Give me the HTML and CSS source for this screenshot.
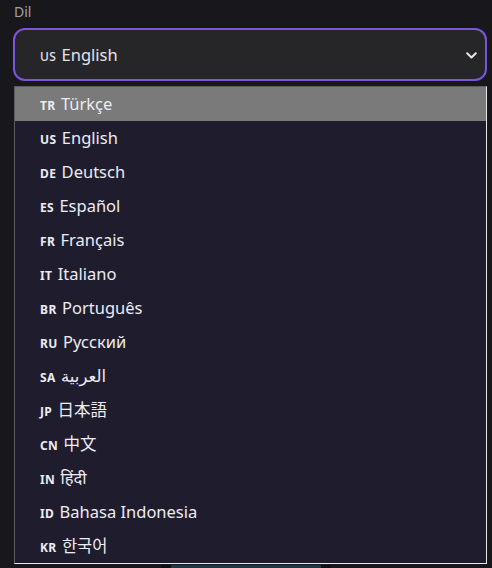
FILE: index.html
```html
<!DOCTYPE html>
<html lang="tr">
<head>
  <meta charset="UTF-8">
  <title>Ayarlar</title>
  <link rel="stylesheet" href="styles.css">
</head>
<body>
  <div class="field">
    <label class="field-label">Dil</label>
    <div class="select">
      <span class="select-value"><span class="flag">US</span> English</span>
      <svg class="chevron" width="11" height="7" viewBox="0 0 11 7">
        <path d="M1.2 1.2 L5.5 5.5 L9.8 1.2" fill="none" stroke="#e6e6ea" stroke-width="2" stroke-linecap="round" stroke-linejoin="round"/>
      </svg>
    </div>

    <ul class="options">
      <li class="option active"><span class="flag">TR</span> Türkçe</li>
      <li class="option"><span class="flag">US</span> English</li>
      <li class="option"><span class="flag">DE</span> Deutsch</li>
      <li class="option"><span class="flag">ES</span> Español</li>
      <li class="option"><span class="flag">FR</span> Français</li>
      <li class="option"><span class="flag">IT</span> Italiano</li>
      <li class="option"><span class="flag">BR</span> Português</li>
      <li class="option"><span class="flag">RU</span> Русский</li>
      <li class="option"><span class="flag">SA</span> <span dir="rtl">العربية</span></li>
      <li class="option"><span class="flag">JP</span> 日本語</li>
      <li class="option"><span class="flag">CN</span> 中文</li>
      <li class="option"><span class="flag">IN</span> हिंदी</li>
      <li class="option"><span class="flag">ID</span> Bahasa Indonesia</li>
      <li class="option"><span class="flag">KR</span> 한국어</li>
    </ul>
  </div>

  <div class="footer">
    <span class="footer-btn"></span>
  </div>
</body>
</html>
```

FILE: styles.css
```css
body {
  margin: 0;
  background: #18171c;
  color: #e6e6ec;
  font-family: 'Noto Sans', 'Noto Sans CJK JP', 'DejaVu Sans', sans-serif;
  overflow: hidden;
}

.field {
  padding: 1px 5px 0 13px;
}

.field-label {
  display: block;
  font-size: 14px;
  line-height: 21px;
  color: #a2a2aa;
  margin: 0 0 6px 1px;
}

.select {
  display: flex;
  align-items: center;
  justify-content: space-between;
  box-sizing: border-box;
  height: 53px;
  padding: 0 8px 0 25px;
  background: #262628;
  border: 2px solid #7b55dc;
  border-radius: 12px;
  font-size: 16.5px;
}

.select-value {
  color: #e4e4e8;
}

.select .flag {
  font-weight: 500;
  color: #e4e4e8;
}

.chevron {
  margin-top: 2px;
}

.flag {
  font-size: 12px;
  font-weight: 700;
  letter-spacing: 0.4px;
  margin-right: 1px;
}

.options {
  list-style: none;
  margin: 5px 0 0 1px;
  padding: 0;
  width: 471px;
  background: #1f1c2e;
  border-top: 1px solid #5c5c60;
  border-left: 1px solid #5c5c60;
  border-right: 1px solid #e8e8ec;
  border-bottom: 1px solid #e8e8ec;
}

.option {
  height: 34px;
  line-height: 34px;
  padding-left: 25px;
  font-size: 16.5px;
  color: #ececf2;
  white-space: nowrap;
}

.option.active {
  background: #7a7a7a;
}

.footer {
  display: flex;
  justify-content: center;
  padding: 1px 0 0 0;
}

.footer-btn {
  display: block;
  width: 150px;
  height: 10px;
  background: #1c3a44;
  border-left: 10px solid #101014;
  border-right: 10px solid #101014;
}
```
